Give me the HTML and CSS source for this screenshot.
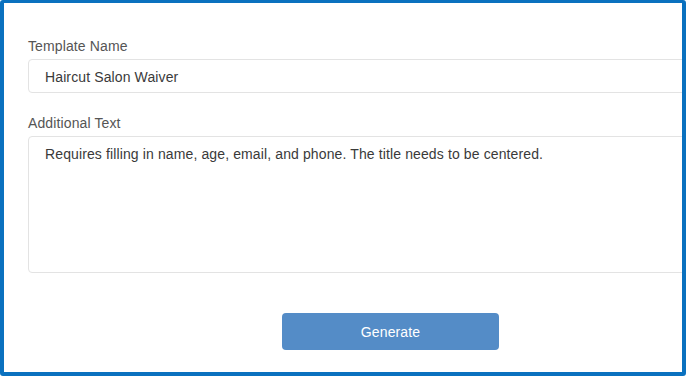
FILE: index.html
```html
<!DOCTYPE html>
<html>
<head>
<meta charset="utf-8">
<link rel="stylesheet" href="styles.css">
</head>
<body>
<div class="frame">
  <form class="form">
    <label class="label">Template Name</label>
    <div class="field field-input">Haircut Salon Waiver</div>
    <label class="label label-2">Additional Text</label>
    <div class="field field-area">Requires filling in name, age, email, and phone. The title needs to be centered.</div>
    <div class="actions">
      <button type="button" class="btn">Generate</button>
    </div>
  </form>
</div>
</body>
</html>
```

FILE: styles.css
```css
html, body {
  margin: 0;
  padding: 0;
  background: #ffffff;
}
.frame {
  box-sizing: border-box;
  width: 686px;
  height: 376px;
  border: 4px solid #0a71bf;
  border-top-width: 3px;
  border-radius: 3px;
  overflow: hidden;
  background: #fff;
  padding: 33px 0 0 24px;
  font-family: "Liberation Sans", Arial, sans-serif;
  font-size: 14px;
  letter-spacing: 0.12px;
  color: #333;
}
.form {
  width: 725px;
  display: flex;
  flex-direction: column;
}
.label {
  display: block;
  line-height: 20px;
  color: #555;
  margin-bottom: 3px;
}
.label-2 {
  margin-top: 20px;
}
.field {
  box-sizing: border-box;
  border: 1px solid #e3e3e3;
  border-radius: 4px;
  color: #3a3a3a;
  line-height: 20px;
  padding: 0 16px;
}
.field-input {
  height: 34px;
  padding-top: 7px;
}
.field-area {
  height: 137px;
  padding-top: 7px;
}
.actions {
  display: flex;
  justify-content: center;
  margin-top: 40px;
}
.btn {
  width: 217px;
  height: 37px;
  border: none;
  border-radius: 4px;
  background: #548cc7;
  color: #fff;
  font-family: "Liberation Sans", Arial, sans-serif;
  font-size: 14px;
  letter-spacing: 0.12px;
  padding: 0;
}
```
